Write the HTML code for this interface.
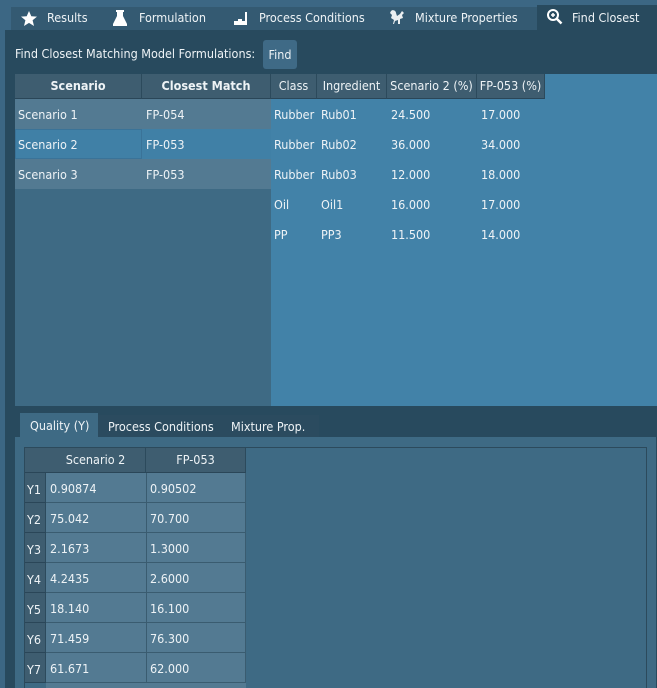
<!DOCTYPE html><html><head><style>
*{margin:0;padding:0;box-sizing:border-box}
html,body{width:657px;height:688px;overflow:hidden}
body{background:#3c6784;font-family:"DejaVu Sans Condensed","Liberation Sans",sans-serif;font-size:12.5px;color:#eef3f6;position:relative}
.a{position:absolute}
.t{position:absolute;white-space:nowrap}
.hd{background:#3e5d70;border-right:1px solid #2c4a5c;border-bottom:1px solid #2a4658;height:25px;line-height:24px;text-align:center}
</style></head><body>
<div class="a" style="left:11px;top:7px;width:646px;height:23px;background:#345a72"></div>
<div class="a" style="left:537px;top:5px;width:120px;height:26px;background:#284a5e"></div>
<svg class="a" style="left:20px;top:10px" width="18" height="17" viewBox="0 0 18 17"><polygon points="9,1 11.3,6.3 17,6.6 12.6,10.3 14,16 9,12.9 4,16 5.4,10.3 1,6.6 6.7,6.3" fill="#fff"/></svg>
<div class="t" style="left:47px;top:10px">Results</div>
<svg class="a" style="left:112px;top:9px" width="16" height="17" viewBox="0 0 16 17"><path d="M4 1h8v2h-1v4l4 8v2H1v-2l4-8V3H4z" fill="#fff"/></svg>
<div class="t" style="left:139px;top:10px">Formulation</div>
<svg class="a" style="left:233px;top:10px" width="16" height="16" viewBox="0 0 16 16"><path d="M1 11h4v-2h4v2h3V2h2v13H1z" fill="#fff"/></svg>
<div class="t" style="left:259px;top:10px">Process Conditions</div>
<svg class="a" style="left:388px;top:8px" width="18" height="18" viewBox="0 0 18 18"><path d="M3 3c2-2 5 0 5 2l1 3 3-2 2-3 2 2-2 2 1 3-3 1v5h-2v-4l-3 1-1 3H5l1-4-3-2 1-3-2-2z" fill="#fff" opacity=".9"/></svg>
<div class="t" style="left:415px;top:10px">Mixture Properties</div>
<svg class="a" style="left:546px;top:8px" width="17" height="17" viewBox="0 0 17 17"><circle cx="7" cy="7" r="5" stroke="#fff" stroke-width="2" fill="none"/><path d="M11 11l4.5 4.5" stroke="#fff" stroke-width="2.5"/><path d="M5 7h4M7 5v4" stroke="#fff" stroke-width="1.5"/></svg>
<div class="t" style="left:572px;top:10px">Find Closest</div>
<div class="a" style="left:5px;top:30px;width:652px;height:658px;background:#284a5e"></div>
<div class="t" style="left:15px;top:46px">Find Closest Matching Model Formulations:</div>
<div class="a" style="left:263px;top:40px;width:34px;height:29px;background:#3f6a86;border-radius:3px;text-align:center;line-height:29px">Find</div>
<div class="a" style="left:15px;top:74px;width:256px;height:332px;background:#3e6a84"></div>
<div class="a" style="left:271px;top:74px;width:386px;height:332px;background:#4282a8"></div>
<div class="a hd" style="left:15px;top:74px;width:127px;font-weight:bold">Scenario</div>
<div class="a hd" style="left:142px;top:74px;width:129px;font-weight:bold">Closest Match</div>
<div class="a hd" style="left:271px;top:74px;width:46px">Class</div>
<div class="a hd" style="left:317px;top:74px;width:70px">Ingredient</div>
<div class="a hd" style="left:387px;top:74px;width:90px">Scenario 2 (%)</div>
<div class="a hd" style="left:477px;top:74px;width:68px">FP-053 (%)</div>
<div class="a" style="left:15px;top:99px;width:256px;height:30px;background:#537a92"></div>
<div class="a" style="left:15px;top:129px;width:256px;height:30px;background:#4080a6"></div>
<div class="a" style="left:15px;top:129px;width:127px;height:30px;border:1px solid #3a7398"></div>
<div class="a" style="left:15px;top:159px;width:256px;height:30px;background:#537a92"></div>
<div class="t" style="left:18px;top:107px">Scenario 1</div><div class="t" style="left:146px;top:107px">FP-054</div>
<div class="t" style="left:18px;top:137px">Scenario 2</div><div class="t" style="left:146px;top:137px">FP-053</div>
<div class="t" style="left:18px;top:167px">Scenario 3</div><div class="t" style="left:146px;top:167px">FP-053</div>
<div class="t" style="left:274px;top:107px">Rubber</div><div class="t" style="left:321px;top:107px">Rub01</div><div class="t" style="left:391px;top:107px">24.500</div><div class="t" style="left:481px;top:107px">17.000</div>
<div class="t" style="left:274px;top:137px">Rubber</div><div class="t" style="left:321px;top:137px">Rub02</div><div class="t" style="left:391px;top:137px">36.000</div><div class="t" style="left:481px;top:137px">34.000</div>
<div class="t" style="left:274px;top:167px">Rubber</div><div class="t" style="left:321px;top:167px">Rub03</div><div class="t" style="left:391px;top:167px">12.000</div><div class="t" style="left:481px;top:167px">18.000</div>
<div class="t" style="left:274px;top:197px">Oil</div><div class="t" style="left:321px;top:197px">Oil1</div><div class="t" style="left:391px;top:197px">16.000</div><div class="t" style="left:481px;top:197px">17.000</div>
<div class="t" style="left:274px;top:227px">PP</div><div class="t" style="left:321px;top:227px">PP3</div><div class="t" style="left:391px;top:227px">11.500</div><div class="t" style="left:481px;top:227px">14.000</div>
<div class="a" style="left:15px;top:437px;width:641px;height:251px;background:#3e6a84"></div>
<div class="a" style="left:98px;top:415px;width:221px;height:22px;background:#2b4b5f"></div>
<div class="a" style="left:20px;top:413px;width:78px;height:24px;background:#3e6a84"></div>
<div class="t" style="left:30px;top:418px">Quality (Y)</div>
<div class="t" style="left:108px;top:419px">Process Conditions</div>
<div class="t" style="left:231px;top:419px">Mixture Prop.</div>
<div class="a" style="left:24px;top:447px;width:623px;height:241px;border:1px solid #2c4a5c;border-bottom:none"></div>
<div class="a hd" style="left:25px;top:448px;width:21px;border-right:none"></div>
<div class="a hd" style="left:46px;top:448px;width:100px">Scenario 2</div>
<div class="a hd" style="left:146px;top:448px;width:100px">FP-053</div>
<div class="a" style="left:46px;top:473px;width:200px;height:215px;background:#537a92"></div>
<div id="g"></div>
<script>
var v=[["0.90874","0.90502"],["75.042","70.700"],["2.1673","1.3000"],["4.2435","2.6000"],["18.140","16.100"],["71.459","76.300"],["61.671","62.000"]],h="";
for(var i=0;i<7;i++){var y=473+i*30;
h+='<div class="a" style="left:25px;top:'+y+'px;width:21px;height:30px;background:#3e5d70;border-bottom:1px solid #2a4658;border-right:1px solid #2c4a5c"></div>';
h+='<div class="t" style="left:27px;top:'+(y+9)+'px">Y'+(i+1)+'</div>';
h+='<div class="a" style="left:46px;top:'+y+'px;width:200px;height:30px;border-bottom:1px solid #3a5c70;border-right:1px solid #3a5c70"></div>';
h+='<div class="a" style="left:146px;top:'+y+'px;width:1px;height:30px;background:#3a5c70"></div>';
h+='<div class="t" style="left:50px;top:'+(y+8)+'px">'+v[i][0]+'</div><div class="t" style="left:150px;top:'+(y+8)+'px">'+v[i][1]+'</div>';}
document.getElementById("g").innerHTML=h;
</script>
</body></html>
